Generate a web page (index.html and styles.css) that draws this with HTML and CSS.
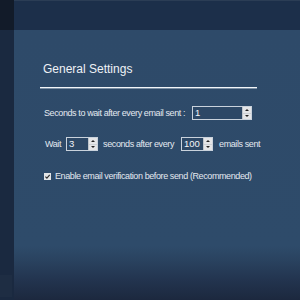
FILE: index.html
```html
<!DOCTYPE html>
<html lang="en">
<head>
  <meta charset="UTF-8">
  <title>General Settings</title>
  <link rel="stylesheet" href="styles.css">
</head>
<body>
  <div class="sidebar">
    <div class="sidebar-top"></div>
    <div class="sidebar-rest"></div>
    <div class="sidebar-foot"></div>
  </div>
  <div class="main">
    <div class="topbar"></div>
    <div class="content">
      <div class="section-title">General Settings</div>

      <div class="row row-first">
        <span>Seconds to wait after every email sent :</span>
        <div class="spin spin-wide">
          <span class="spin-value">1</span>
          <div class="spin-btns"><i class="up"></i><i class="down"></i></div>
        </div>
      </div>

      <div class="row row-second">
        <span>Wait</span>
        <div class="spin spin-small">
          <span class="spin-value">3</span>
          <div class="spin-btns"><i class="up"></i><i class="down"></i></div>
        </div>
        <span>seconds after every</span>
        <div class="spin spin-small">
          <span class="spin-value">100</span>
          <div class="spin-btns"><i class="up"></i><i class="down"></i></div>
        </div>
        <span>emails sent</span>
      </div>

      <div class="row row-check">
        <svg class="check" width="7" height="7" viewBox="0 0 7 7">
          <rect x="0" y="0" width="7" height="7" fill="#e2e4e6"/>
          <path d="M1.4 3.6 L2.9 5.1 L5.7 1.8" fill="none" stroke="#2a2a2a" stroke-width="1.1"/>
        </svg>
        <span>Enable email verification before send (Recommended)</span>
      </div>
    </div>
  </div>
</body>
</html>
```

FILE: styles.css
```css
* { box-sizing: border-box; }
html, body { height: 100%; }
body {
  margin: 0;
  display: flex;
  font-family: 'Liberation Sans', Arial, sans-serif;
  color: #e3e9f0;
  background: #2e4a69;
  overflow: hidden;
}
.sidebar {
  width: 14px;
  display: flex;
  flex-direction: column;
  background: #1a2940;
}
.sidebar-top {
  height: 30px;
  background: #121b29;
}
.sidebar-rest { flex: 1; }
.sidebar-foot {
  height: 22px;
  width: 12px;
  margin-bottom: 3px;
  background: #1e2d43;
}
.main {
  flex: 1;
  display: flex;
  flex-direction: column;
}
.topbar {
  height: 30px;
  background: #1c2f4a;
  border-top: 1px solid #2b3d55;
}
.content {
  flex: 1;
  padding: 32px 0 0 26px;
  background: linear-gradient(to bottom, #2e4a69 0%, #2e4b6a 80%, #2a4360 85%, #233550 92%, #1c283e 100%);
}
.section-title {
  width: 217px;
  padding: 0 0 11px 3px;
  font-size: 12px;
  line-height: 14px;
  border-bottom: 1px solid #f2f5f8;
  box-shadow: 0 1px 0 rgba(220, 230, 240, 0.45);
  color: #eef2f6;
}
.row {
  display: flex;
  align-items: center;
  height: 14px;
  font-size: 9px;
  letter-spacing: -0.4px;
  white-space: nowrap;
}
.row-first {
  margin-top: 18px;
  padding-left: 4px;
  gap: 7px;
}
.row-second {
  margin-top: 17px;
  padding-left: 5px;
  gap: 5px;
}
.row-second .spin:last-of-type { margin-left: 2px; margin-right: 1px; }
.row-check {
  margin-top: 18px;
  padding-left: 4px;
  gap: 4px;
}
.check { display: block; }
.spin {
  height: 14px;
  display: flex;
  border: 1px solid #c9d2dc;
  background: #2d4866;
}
.spin-wide { width: 60px; }
.spin-small { width: 32px; }
.spin-value {
  flex: 1;
  padding-left: 2px;
  line-height: 12px;
  font-size: 9.5px;
  letter-spacing: 0;
  color: #f2f5f8;
}
.spin-btns {
  width: 9px;
  display: flex;
  flex-direction: column;
  background: #e4e5e7;
  border-left: 1px solid #bfc5cc;
}
.spin-btns i {
  flex: 1;
  display: flex;
  align-items: center;
  justify-content: center;
}
.spin-btns i::before {
  content: '';
  border-left: 2px solid transparent;
  border-right: 2px solid transparent;
}
.spin-btns .up { border-bottom: 1px solid #cdd1d6; }
.spin-btns .up::before { border-bottom: 2px solid #222; }
.spin-btns .down::before { border-top: 2px solid #222; }
```
